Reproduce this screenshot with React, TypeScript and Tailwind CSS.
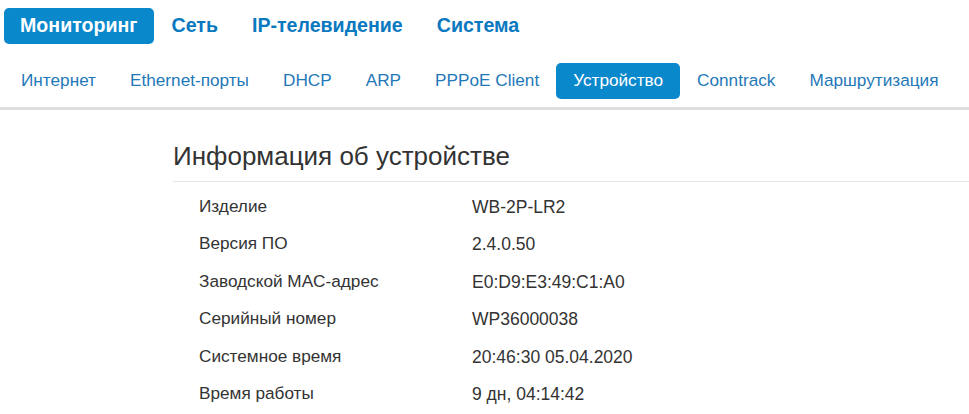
import React from "react";

const top = ["Мониторинг", "Сеть", "IP-телевидение", "Система"];
const sub = [
  "Интернет",
  "Ethernet-порты",
  "DHCP",
  "ARP",
  "PPPoE Client",
  "Устройство",
  "Conntrack",
  "Маршрутизация",
];
const rows: [string, string][] = [
  ["Изделие", "WB-2P-LR2"],
  ["Версия ПО", "2.4.0.50"],
  ["Заводской MAC-адрес", "E0:D9:E3:49:C1:A0"],
  ["Серийный номер", "WP36000038"],
  ["Системное время", "20:46:30 05.04.2020"],
  ["Время работы", "9 дн, 04:14:42"],
];

export default function App() {
  return (
    <div
      className="w-[969px] h-[414px] overflow-hidden bg-white text-[#333]"
      style={{ fontFamily: '"Liberation Sans", Arial, sans-serif' }}
    >
      <div className="flex gap-[2px] pt-[8px] pl-[4px]">
        {top.map((t, i) => (
          <div
            key={t}
            className={
              "h-[36px] px-[16px] flex items-center rounded-[5px] text-[19.6px] font-bold " +
              (i === 0 ? "bg-[#0a88cc] text-white" : "text-[#0a79c0]")
            }
          >
            {t}
          </div>
        ))}
      </div>
      <div className="flex mt-[19px] pl-[4px]">
        {sub.map((t) => (
          <div
            key={t}
            className={
              "h-[36px] px-[17px] flex items-center rounded-[5px] text-[17.2px] " +
              (t === "Устройство" ? "bg-[#0a88cc] text-white" : "text-[#1f78b8]")
            }
          >
            {t}
          </div>
        ))}
      </div>
      <div className="mt-[8px] h-[3px] bg-[#dedede]" />
      <div className="pl-[173px]">
        <div className="mt-[31px] pb-[10px] border-b border-[#e6e6e6] text-[26px] leading-[30px] text-[#333]">
          Информация об устройстве
        </div>
        <div className="mt-[6px] pl-[26px]">
          {rows.map(([k, v]) => (
            <div key={k} className="flex items-center h-[37.5px]">
              <div className="w-[273px] text-[17.2px]">{k}</div>
              <div className="text-[17.5px]">{v}</div>
            </div>
          ))}
        </div>
      </div>
    </div>
  );
}
